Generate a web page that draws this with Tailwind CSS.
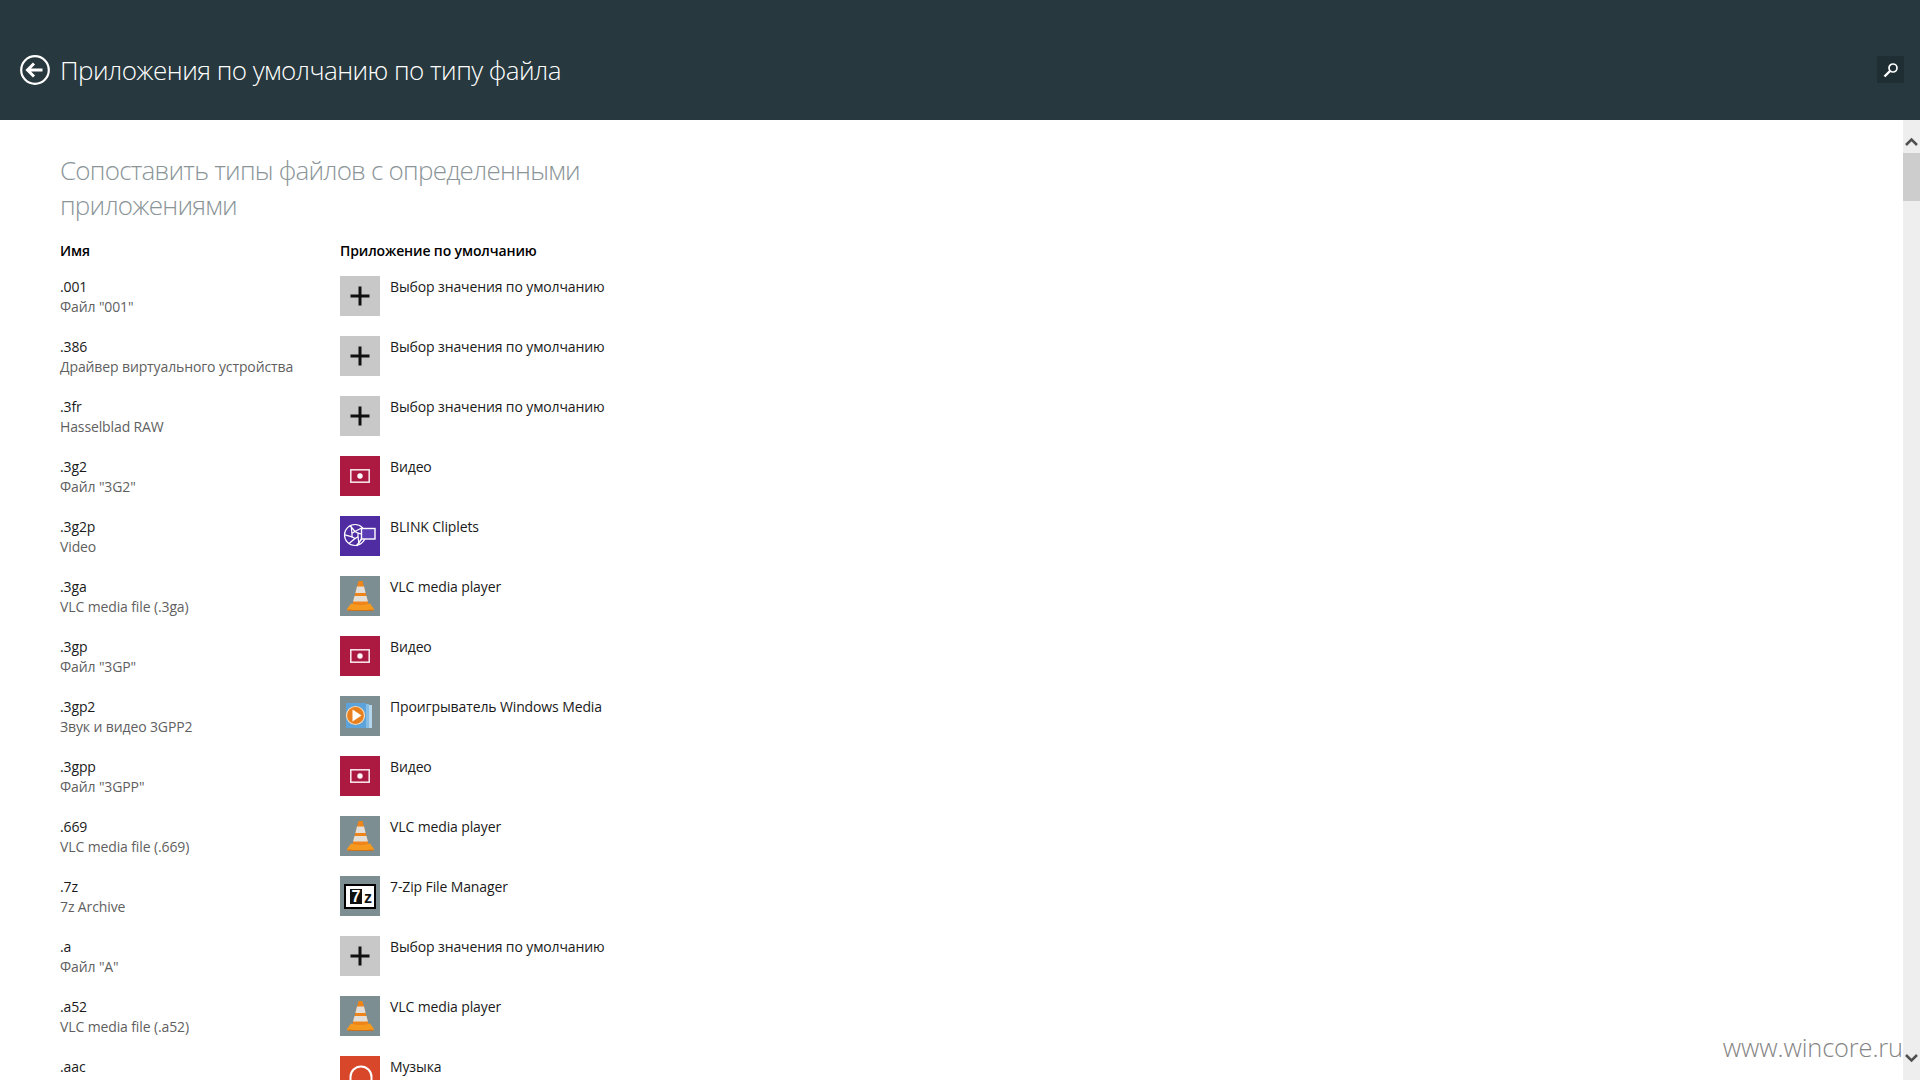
<!DOCTYPE html>
<html lang="ru">
<head>
<meta charset="UTF-8">
<title>Приложения по умолчанию по типу файла</title>
<script src="https://cdn.jsdelivr.net/npm/@tailwindcss/browser@4"></script>
</head>
<body class="h-screen overflow-hidden bg-white font-['Open_Sans','Noto_Sans',sans-serif] text-[14px] tracking-[-0.12px] text-[#1a1a1a]">
<svg class="hidden">
  <symbol id="plus" viewBox="0 0 40 40"><rect width="40" height="40" fill="#c8c8c8"/><path d="M20 10.500v19M10.500 20h19" stroke="#111" stroke-width="3" fill="none"/></symbol>
  <symbol id="video" viewBox="0 0 40 40"><rect width="40" height="40" fill="#ac1a42"/><rect x="10.800" y="13.800" width="18.400" height="12.400" fill="none" stroke="#f3dfe4" stroke-width="1.600"/><circle cx="20" cy="20" r="2.700" fill="#fff"/></symbol>
  <symbol id="blink" viewBox="0 0 40 40"><rect width="40" height="40" fill="#4f2ca2"/><g fill="none" stroke="#fff" stroke-width="1.200"><circle cx="15" cy="19" r="10.500"/><path d="M15 15.500l3 1.700v3.600l-3 1.700-3-1.700v-3.600z"/><path d="M15 15.500l7.500-4M18 17.200l7.500 1.800M18 20.800l1 8M15 22.500l-6 5M12 20.800l-7-2M12 17.200l-1-8M15 15.500l-5-6"/><path d="M16.500 30l5-7" stroke-width="1.500"/><rect x="21.500" y="12.500" width="13.500" height="10.500" fill="#5a3db4" stroke-width="1.400"/></g></symbol>
  <symbol id="vlc" viewBox="0 0 40 40"><rect width="40" height="40" fill="#7d8e93"/><path d="M18.500 5h4l6.500 25H12z" fill="#ef8418"/><path d="M17 10.500h7l1.600 6.500H15.400z" fill="#e3dfd8"/><path d="M14.500 20h12l1.400 5.500H13z" fill="#e3dfd8"/><path d="M11 27.500q9.500 3 19 0l4 5.500q.5 1.500-2 1.500H9q-2.500 0-2-1.500z" fill="#f59a1f"/><path d="M7.500 33.500q13 1 26 0l-1 1.200H8.500z" fill="#cf6a10"/></symbol>
  <symbol id="wmp" viewBox="0 0 40 40"><rect width="40" height="40" fill="#7d8e93"/><rect x="26" y="9" width="6" height="23" fill="#b5d6ec"/><rect x="22" y="8" width="7" height="24" fill="#85bde4"/><rect x="6" y="7" width="20" height="25" fill="#5ba3da"/><circle cx="15.500" cy="19.500" r="9" fill="#e9801f" stroke="#f7d9b4" stroke-width="1.200"/><path d="M12.500 13.500l9 6-9 6z" fill="#fff"/></symbol>
  <symbol id="zip" viewBox="0 0 40 40"><rect width="40" height="40" fill="#7d8e93"/><rect x="5" y="9" width="30" height="23" fill="#fff" stroke="#000" stroke-width="2"/><rect x="10" y="13" width="12" height="15" fill="#111"/><text x="16" y="26" text-anchor="middle" font-family="Liberation Sans" font-weight="700" font-size="16" fill="#fff">7</text><text x="28" y="27" text-anchor="middle" font-family="Liberation Sans" font-weight="700" font-size="16" fill="#111">z</text></symbol>
  <symbol id="music" viewBox="0 0 40 40"><rect width="40" height="40" fill="#d8472a"/><path d="M10.500 24v-3a10.500 10.500 0 0 1 21 0v3" fill="none" stroke="#fff" stroke-width="2"/></symbol>
</svg>

<header class="flex h-[120px] bg-[#27383e] text-white">
  <div class="flex items-center gap-[5px] pl-5 pt-[20px] h-full">
    <svg class="h-[30px] w-[35px]" viewBox="0 0 35 30"><circle cx="15" cy="15" r="13.800" fill="none" stroke="#fff" stroke-width="2.200"/><path d="M7.500 15h15M14 8.500L7.500 15l6.500 6.500" fill="none" stroke="#fff" stroke-width="3"/></svg>
    <h1 class="font-light text-[26px] leading-[35px] tracking-[-0.54px] whitespace-nowrap">Приложения по умолчанию по типу файла</h1>
  </div>
  <div class="ml-auto mr-[16px] mt-[56px] flex h-[27px] w-[27px] items-center justify-center bg-[#1f2e33]">
    <svg class="h-[16px] w-[16px]" viewBox="0 0 16 16"><circle cx="10" cy="6" r="4" fill="none" stroke="#fff" stroke-width="1.700"/><path d="M7 9l-5.500 5.500" stroke="#fff" stroke-width="2.400"/></svg>
  </div>
</header>

<div class="relative flex h-[960px]">
  <main class="flex-1 pl-[60px] pt-[33px]">
    <h2 class="w-[560px] font-light text-[26px] leading-[35px] tracking-[-0.77px] text-[#8b9598]">Сопоставить типы файлов с определенными приложениями</h2>
    <div class="mt-[17px] mb-[16px] flex h-[20px] items-center font-semibold text-black">
      <div class="w-[280px]">Имя</div>
      <div>Приложение по умолчанию</div>
    </div>

    <div class="flex h-[60px]"><div class="w-[280px] pt-[1px] leading-[20px]"><div>.001</div><div class="text-[#5f5f5f]">Файл "001"</div></div><svg class="h-[40px] w-[40px]"><use href="#plus"/></svg><div class="ml-[10px] pt-[1px] leading-[20px]">Выбор значения по умолчанию</div></div>
    <div class="flex h-[60px]"><div class="w-[280px] pt-[1px] leading-[20px]"><div>.386</div><div class="text-[#5f5f5f]">Драйвер виртуального устройства</div></div><svg class="h-[40px] w-[40px]"><use href="#plus"/></svg><div class="ml-[10px] pt-[1px] leading-[20px]">Выбор значения по умолчанию</div></div>
    <div class="flex h-[60px]"><div class="w-[280px] pt-[1px] leading-[20px]"><div>.3fr</div><div class="text-[#5f5f5f]">Hasselblad RAW</div></div><svg class="h-[40px] w-[40px]"><use href="#plus"/></svg><div class="ml-[10px] pt-[1px] leading-[20px]">Выбор значения по умолчанию</div></div>
    <div class="flex h-[60px]"><div class="w-[280px] pt-[1px] leading-[20px]"><div>.3g2</div><div class="text-[#5f5f5f]">Файл "3G2"</div></div><svg class="h-[40px] w-[40px]"><use href="#video"/></svg><div class="ml-[10px] pt-[1px] leading-[20px]">Видео</div></div>
    <div class="flex h-[60px]"><div class="w-[280px] pt-[1px] leading-[20px]"><div>.3g2p</div><div class="text-[#5f5f5f]">Video</div></div><svg class="h-[40px] w-[40px]"><use href="#blink"/></svg><div class="ml-[10px] pt-[1px] leading-[20px]">BLINK Cliplets</div></div>
    <div class="flex h-[60px]"><div class="w-[280px] pt-[1px] leading-[20px]"><div>.3ga</div><div class="text-[#5f5f5f]">VLC media file (.3ga)</div></div><svg class="h-[40px] w-[40px]"><use href="#vlc"/></svg><div class="ml-[10px] pt-[1px] leading-[20px]">VLC media player</div></div>
    <div class="flex h-[60px]"><div class="w-[280px] pt-[1px] leading-[20px]"><div>.3gp</div><div class="text-[#5f5f5f]">Файл "3GP"</div></div><svg class="h-[40px] w-[40px]"><use href="#video"/></svg><div class="ml-[10px] pt-[1px] leading-[20px]">Видео</div></div>
    <div class="flex h-[60px]"><div class="w-[280px] pt-[1px] leading-[20px]"><div>.3gp2</div><div class="text-[#5f5f5f]">Звук и видео 3GPP2</div></div><svg class="h-[40px] w-[40px]"><use href="#wmp"/></svg><div class="ml-[10px] pt-[1px] leading-[20px]">Проигрыватель Windows Media</div></div>
    <div class="flex h-[60px]"><div class="w-[280px] pt-[1px] leading-[20px]"><div>.3gpp</div><div class="text-[#5f5f5f]">Файл "3GPP"</div></div><svg class="h-[40px] w-[40px]"><use href="#video"/></svg><div class="ml-[10px] pt-[1px] leading-[20px]">Видео</div></div>
    <div class="flex h-[60px]"><div class="w-[280px] pt-[1px] leading-[20px]"><div>.669</div><div class="text-[#5f5f5f]">VLC media file (.669)</div></div><svg class="h-[40px] w-[40px]"><use href="#vlc"/></svg><div class="ml-[10px] pt-[1px] leading-[20px]">VLC media player</div></div>
    <div class="flex h-[60px]"><div class="w-[280px] pt-[1px] leading-[20px]"><div>.7z</div><div class="text-[#5f5f5f]">7z Archive</div></div><svg class="h-[40px] w-[40px]"><use href="#zip"/></svg><div class="ml-[10px] pt-[1px] leading-[20px]">7-Zip File Manager</div></div>
    <div class="flex h-[60px]"><div class="w-[280px] pt-[1px] leading-[20px]"><div>.a</div><div class="text-[#5f5f5f]">Файл "A"</div></div><svg class="h-[40px] w-[40px]"><use href="#plus"/></svg><div class="ml-[10px] pt-[1px] leading-[20px]">Выбор значения по умолчанию</div></div>
    <div class="flex h-[60px]"><div class="w-[280px] pt-[1px] leading-[20px]"><div>.a52</div><div class="text-[#5f5f5f]">VLC media file (.a52)</div></div><svg class="h-[40px] w-[40px]"><use href="#vlc"/></svg><div class="ml-[10px] pt-[1px] leading-[20px]">VLC media player</div></div>
    <div class="flex h-[60px]"><div class="w-[280px] pt-[1px] leading-[20px]"><div>.aac</div></div><svg class="h-[40px] w-[40px]"><use href="#music"/></svg><div class="ml-[10px] pt-[1px] leading-[20px]">Музыка</div></div>
  </main>

  <!-- scrollbar -->
  <div class="flex w-[17px] flex-col bg-[#eeeeee]">
    <div class="flex h-[33px] items-start justify-center pt-[17px]">
      <svg class="h-[10px] w-[13px]" viewBox="0 0 13 10"><path d="M1 8l5.500-5.500L12 8" fill="none" stroke="#505050" stroke-width="2.500"/></svg>
    </div>
    <div class="h-[48px] bg-[#cdcdcd]"></div>
    <div class="mt-auto flex h-[33px] items-end justify-center pb-[17px]">
      <svg class="h-[10px] w-[13px]" viewBox="0 0 13 10"><path d="M1 2l5.500 5.500L12 2" fill="none" stroke="#505050" stroke-width="2.500"/></svg>
    </div>
  </div>

  <!-- watermark over the page -->
  <div class="absolute bottom-[16px] right-[17px] font-light text-[25.400px] leading-[34px] text-[#858585]">www.wincore.ru</div>
</div>
</body>
</html>
